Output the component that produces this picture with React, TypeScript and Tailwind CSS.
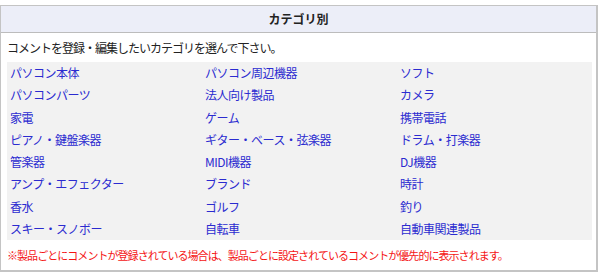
const categories = [
  "パソコン本体",
  "パソコン周辺機器",
  "ソフト",
  "パソコンパーツ",
  "法人向け製品",
  "カメラ",
  "家電",
  "ゲーム",
  "携帯電話",
  "ピアノ・鍵盤楽器",
  "ギター・ベース・弦楽器",
  "ドラム・打楽器",
  "管楽器",
  "MIDI機器",
  "DJ機器",
  "アンプ・エフェクター",
  "ブランド",
  "時計",
  "香水",
  "ゴルフ",
  "釣り",
  "スキー・スノボー",
  "自転車",
  "自動車関連製品",
];

export default function App() {
  return (
    <div
      className="bg-white w-[600px] h-[275px] pt-[5px]"
      style={{ fontFamily: '"Noto Sans CJK JP", "Noto Sans", sans-serif' }}
    >
      <div className="w-[598px] h-[267px] border-l border-t border-r-2 border-b-2 border-[#c4c4c4] flex flex-col">
        <div className="h-[27px] bg-[#eceef8] border-b border-[#bcbcbc] flex items-center justify-center text-[12px] font-bold text-[#222]">
          カテゴリ別
        </div>
        <div className="h-[29px] flex items-center pl-[6px] text-[12px] text-[#222] tracking-[-1px]">
          コメントを登録・編集したいカテゴリを選んで下さい。
        </div>
        <div className="ml-[6px] mr-[4px] h-[178px] bg-[#f2f2f2] grid grid-cols-[195px_195px_1fr] auto-rows-[22.25px] pl-[3px]">
          {categories.map((c) => (
            <a
              key={c}
              href="#"
              className="flex items-center text-[12px] text-[#2b2bd0] tracking-[-0.5px]"
            >
              {c}
            </a>
          ))}
        </div>
        <div className="flex-1 flex items-center pl-[6px] text-[11px] text-[#f41414] tracking-[-0.95px]">
          ※製品ごとにコメントが登録されている場合は、製品ごとに設定されているコメントが優先的に表示されます。
        </div>
      </div>
    </div>
  );
}
